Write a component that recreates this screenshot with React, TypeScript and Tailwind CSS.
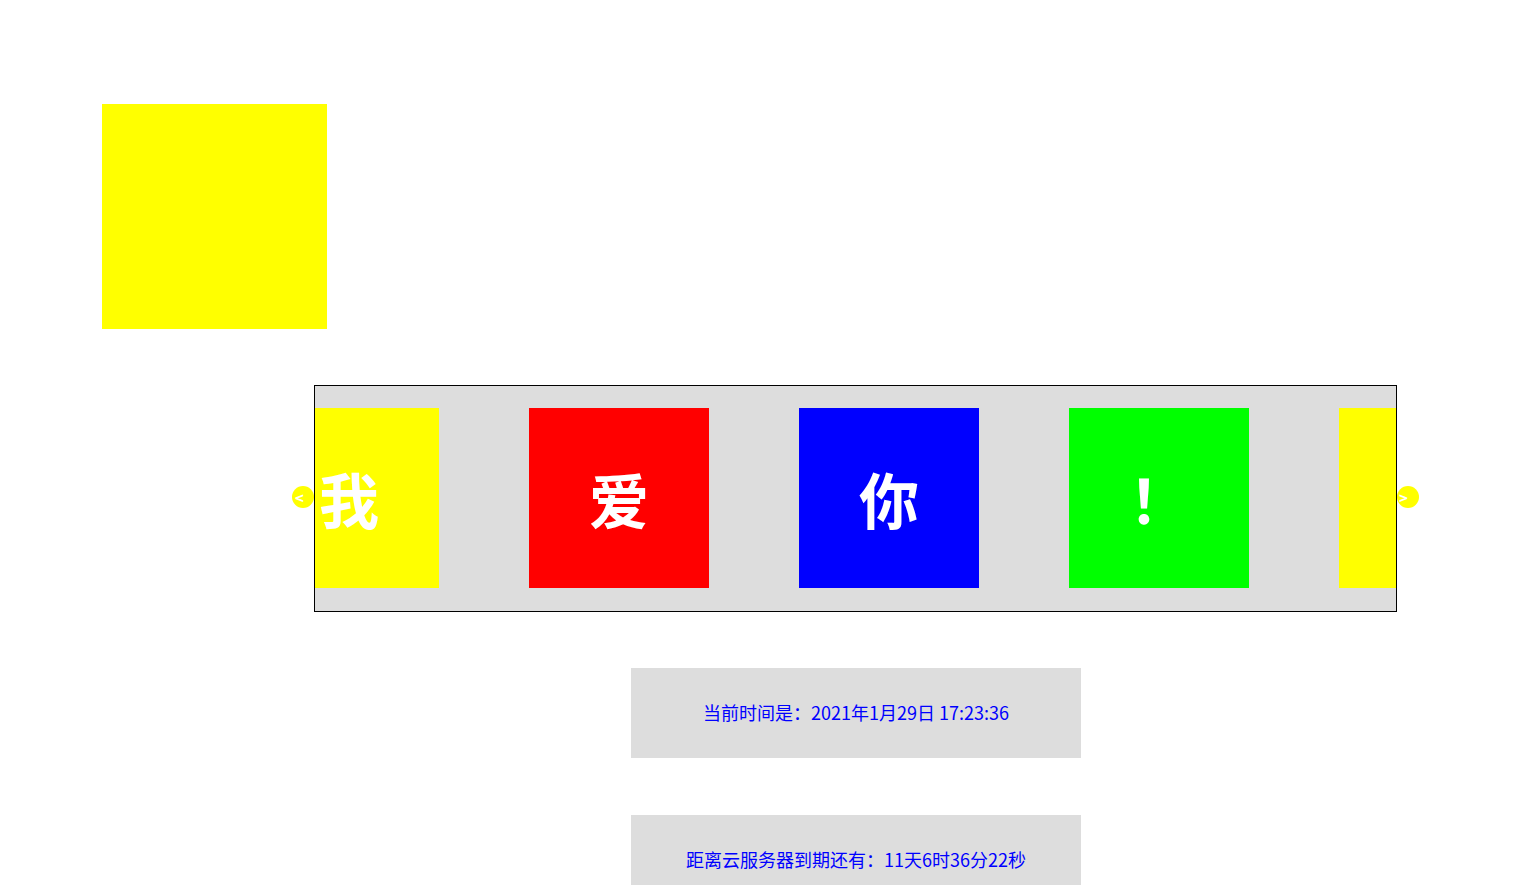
export default function App() {
  const slides = [
    { text: "我", bg: "bg-[#ffff00]" },
    { text: "爱", bg: "bg-[#ff0000]" },
    { text: "你", bg: "bg-[#0000ff]" },
    { text: "！", bg: "bg-[#00ff00]" },
    { text: "我", bg: "bg-[#ffff00]" },
  ];

  return (
    <div
      className="min-h-[885px] bg-white pt-[104px]"
      style={{ fontFamily: '"Noto Sans CJK SC", "Noto Sans", sans-serif' }}
    >
      {/* Box */}
      <div className="ml-[102px] h-[225px] w-[225px] bg-[#ffff00]" />

      {/* Carousel */}
      <div className="relative ml-[314px] mt-[56px] w-[1083px]">
        <div className="absolute left-[-22px] top-[101px] flex h-[22px] w-[22px] items-center rounded-full bg-[#ffff00] pl-[3px] text-[15px] font-bold leading-none text-white">
          &lt;
        </div>
        <div className="absolute left-[1083px] top-[101px] flex h-[22px] w-[22px] items-center rounded-full bg-[#ffff00] pl-[2px] text-[15px] font-bold leading-none text-white">
          &gt;
        </div>
        <div className="relative h-[227px] overflow-hidden border border-black bg-[#dddddd] pt-[22px]">
          <div className="ml-[-56px] flex gap-[90px]">
            {slides.map((s, i) => (
              <div
                key={i}
                className={`flex h-[180px] w-[180px] shrink-0 items-center justify-center text-[60px] font-bold leading-none text-white ${s.bg}`}
              >
                {s.text}
              </div>
            ))}
          </div>
        </div>
      </div>

      {/* Clock */}
      <div className="ml-[631px] mt-[56px] flex h-[90px] w-[450px] items-center justify-center bg-[#dddddd] pb-[2px] text-[18px] text-[#0000ff]">
        当前时间是：2021年1月29日 17:23:36
      </div>

      <div className="ml-[631px] mt-[57px] flex h-[90px] w-[450px] items-center justify-center bg-[#dddddd] pb-[2px] text-[18px] text-[#0000ff]">
        距离云服务器到期还有：11天6时36分22秒
      </div>
    </div>
  );
}
